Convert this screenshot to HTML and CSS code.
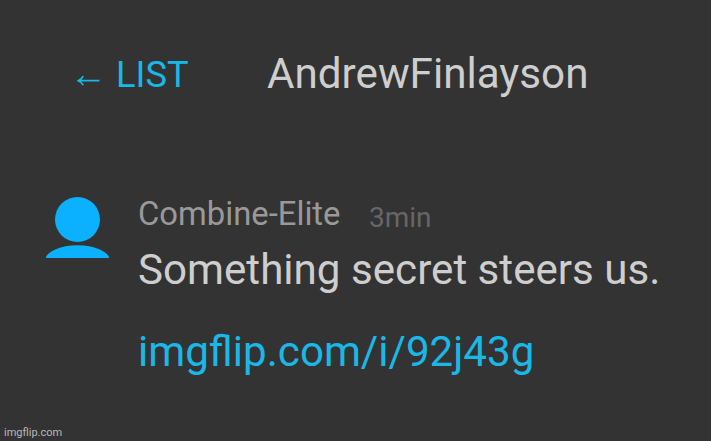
FILE: index.html
```html
<!DOCTYPE html>
<html lang="en">
<head>
<meta charset="utf-8">
<title>AndrewFinlayson</title>
<link rel="stylesheet" href="styles.css">
</head>
<body>
<header class="header">
  <a class="back"><svg class="arrow" viewBox="0 0 24 14"><path d="M22.500 6.700H2M6.200 2.200Q4.500 5.500 1.200 6.700Q4.500 8 6.200 11.200"/></svg><span class="back-label">LIST</span></a>
  <h1 class="title">AndrewFinlayson</h1>
</header>
<main class="message">
  <svg class="avatar" viewBox="0 0 64 62"><circle cx="31.500" cy="23.500" r="22.500"/><path d="M0 62C-0.500 58 11 49.200 31.500 49.200S63.500 58 63 62Z"/></svg>
  <div class="content">
    <div class="meta"><span class="name">Combine-Elite</span><span class="time">3min</span></div>
    <p class="text">Something secret steers us.</p>
    <a class="link">imgflip.com/i/92j43g</a>
  </div>
</main>
<footer class="watermark">imgflip.com</footer>
</body>
</html>
```
FILE: styles.css
```css
* { box-sizing: border-box; }
body {
  margin: 0;
  width: 711px;
  height: 441px;
  overflow: hidden;
  background: #333;
  color: #cecece;
  font-family: Roboto, sans-serif;
  display: flex;
  flex-direction: column;
}
.header { display: flex; height: 192px; padding: 49px 0 0 77px; }
.back { display: flex; width: 190px; color: #1ab8e6; font-size: 36.3px; line-height: 52px; }
.arrow { width: 24px; height: 14px; margin: 25px 15px 0 0; fill: none; stroke: currentColor; stroke-width: 1.7; }
.title { margin: 0; font-size: 42.2px; font-weight: 400; line-height: 50px; white-space: nowrap; }
.message { display: flex; height: 234px; padding-left: 46px; }
.avatar { width: 64px; height: 62px; margin: 4px 28px 0 0; fill: #0bb1ff; flex: none; }
.content { white-space: nowrap; }
.meta { display: flex; height: 53px; line-height: 44px; }
.name { width: 231px; color: #999; font-size: 32.8px; }
.time { color: #666; font-size: 28px; line-height: 52px; }
.text { margin: 0; height: 82px; font-size: 42.15px; line-height: 50px; }
.link { display: block; color: #1ab8e6; font-size: 42.15px; line-height: 50px; }
.watermark { padding-left: 4px; color: #b8b8b8; font-size: 11px; line-height: 13px; }
```
